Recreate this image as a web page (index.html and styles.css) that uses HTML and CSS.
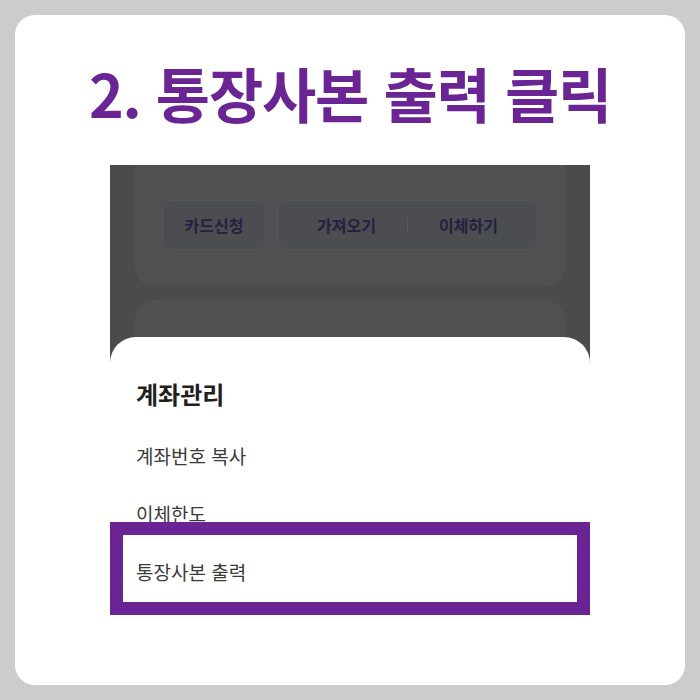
FILE: index.html
```html
<!DOCTYPE html>
<html lang="ko">
<head>
  <meta charset="UTF-8">
  <meta name="viewport" content="width=device-width, initial-scale=1.0">
  <title>통장사본 출력 클릭</title>
  <link rel="stylesheet" href="styles.css">
</head>
<body>

  <div class="card">
    <h1 class="title">2. 통장사본 출력 클릭</h1>

    <div class="phone">
      <div class="account-card">
        <div class="actions">
          <div class="btn single">카드신청</div>
          <div class="btn group">
            <span>가져오기</span>
            <i class="divider"></i>
            <span>이체하기</span>
          </div>
        </div>
      </div>
      <div class="next-card"></div>

      <div class="sheet">
        <div class="sheet-title">계좌관리</div>
        <div class="menu-item">계좌번호 복사</div>
        <div class="menu-item">이체한도</div>
        <div class="menu-item">통장사본 출력</div>
        <div class="highlight"></div>
      </div>
    </div>
  </div>

</body>
</html>
```

FILE: styles.css
```css
body {
  margin: 0;
  padding: 15px;
  background: #cccccc;
  font-family: "Noto Sans CJK KR", "Noto Sans", sans-serif;
}

.card {
  width: 670px;
  height: 670px;
  background: #fff;
  border-radius: 20px;
  overflow: hidden;
}

.title {
  margin: 0;
  padding-top: 48px;
  height: 150px;
  box-sizing: border-box;
  text-align: center;
  font-size: 59px;
  line-height: 60px;
  font-weight: 700;
  letter-spacing: -1.2px;
  color: #6a2494;
}

.phone {
  position: relative;
  margin-left: 95px;
  width: 480px;
  height: 450px;
  background: #4b4b4b;
  overflow: hidden;
}

.account-card {
  margin: 0 25px;
  height: 122px;
  padding: 35px 27px 0;
  box-sizing: border-box;
  background: #505050;
  border-radius: 0 0 20px 20px;
}

.actions {
  display: flex;
  gap: 11px;
}

.btn {
  height: 50px;
  box-sizing: border-box;
  display: flex;
  align-items: center;
  justify-content: center;
  background: #4c4d51;
  border: 1px solid #55565a;
  border-radius: 10px;
  color: #22213f;
  font-size: 16px;
  font-weight: 700;
}

.single {
  width: 104px;
}

.group {
  flex: 1;
  gap: 31px;
}

.divider {
  width: 1px;
  height: 16px;
  background: #58595d;
}

.next-card {
  margin: 13px 25px 0;
  height: 80px;
  background: #505050;
  border-radius: 20px 20px 0 0;
}

.sheet {
  position: absolute;
  left: 0;
  right: 0;
  bottom: 0;
  height: 278px;
  padding: 43px 26px 0;
  box-sizing: border-box;
  background: #fff;
  border-radius: 26px 26px 0 0;
}

.sheet-title {
  font-size: 24px;
  line-height: 28px;
  font-weight: 700;
  color: #1f1f1f;
  margin-bottom: 19px;
}

.menu-item {
  font-size: 19px;
  line-height: 58px;
  color: #3a3a3a;
}

.highlight {
  position: absolute;
  left: 0;
  right: 0;
  bottom: 0;
  height: 93px;
  border: 13px solid #6a2494;
  box-sizing: border-box;
}
```
